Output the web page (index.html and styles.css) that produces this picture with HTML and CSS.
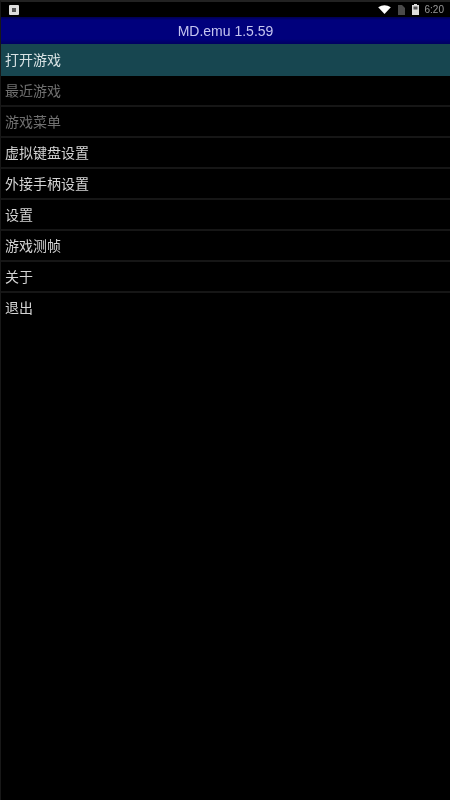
FILE: index.html
```html
<!DOCTYPE html>
<html lang="zh">
<head>
<meta charset="utf-8">
<title>MD.emu</title>
<link rel="stylesheet" href="styles.css">
</head>
<body>
<div class="screen">
  <div class="status">
    <svg class="notif" viewBox="0 0 10 10"><rect width="10" height="10" rx="1" fill="#ddd"/><rect x="3" y="3" width="4" height="4" fill="#555"/></svg>
    <div class="status-right">
      <svg class="wifi" viewBox="0 0 14 10"><path d="M0 2.5Q7-2 14 2.5L7 10Z" fill="#fff"/></svg>
      <svg class="sim" viewBox="0 0 8 10"><path d="M1 0H5L8 3V10H1Z" fill="#4a4a4a"/></svg>
      <svg class="batt" viewBox="0 0 7 11"><rect x="2" width="3" height="1" fill="#ddd"/><rect y="1" width="7" height="10" fill="#ddd"/><rect x="1.5" y="2.5" width="4" height="3" fill="#555"/></svg>
      <span class="time">6:20</span>
    </div>
  </div>
  <div class="title">MD.emu 1.5.59</div>
  <ul class="menu">
    <li class="item active">打开游戏</li>
    <li class="item dim">最近游戏</li>
    <li class="item dim">游戏菜单</li>
    <li class="item">虚拟键盘设置</li>
    <li class="item">外接手柄设置</li>
    <li class="item">设置</li>
    <li class="item">游戏测帧</li>
    <li class="item">关于</li>
    <li class="item last">退出</li>
  </ul>
</div>
</body>
</html>
```
FILE: styles.css
```css
html, body {
  margin: 0;
  padding: 0;
  background: #000;
}
.screen {
  width: 450px;
  height: 800px;
  overflow: hidden;
  box-sizing: border-box;
  background: #000;
  border-left: 1px solid #181818;
  border-top: 2px solid #222;
  font-family: "Liberation Sans", "Noto Sans CJK SC", sans-serif;
  filter: blur(0.6px);
}
.status {
  height: 15px;
  display: flex;
  align-items: center;
  justify-content: space-between;
  padding: 0 6px 0 8px;
}
.notif { width: 10px; height: 10px; }
.status-right {
  display: flex;
  align-items: center;
}
.wifi { width: 13px; height: 9px; margin-right: 6px; }
.sim { width: 8px; height: 10px; margin-right: 7px; }
.batt { width: 7px; height: 11px; margin-right: 6px; }
.time {
  font-size: 10px;
  color: #999;
}
.title {
  box-sizing: border-box;
  height: 27px;
  padding-top: 1px;
  line-height: 27px;
  text-align: center;
  font-size: 14px;
  color: #c4c4f0;
  background: linear-gradient(#000050, #00007c 3px, #00007c 22px, #000060);
}
.menu {
  list-style: none;
  margin: 0;
  padding: 0;
}
.item {
  box-sizing: content-box;
  height: 28px;
  padding-top: 1px;
  line-height: 29px;
  padding-left: 4px;
  font-size: 14px;
  color: #d4d4d4;
  border-bottom: 2px solid #161616;
}
.active {
  height: 31px;
  line-height: 31px;
  background: #174650;
  border-bottom: 0;
  color: #d8e2e4;
}
.dim { color: #707070; }
.last { border-bottom: 0; }
```
